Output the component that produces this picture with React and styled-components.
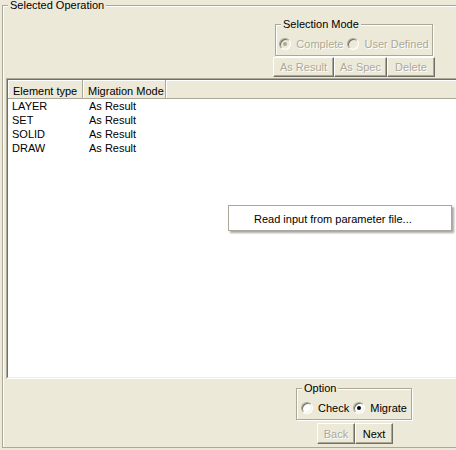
import styled, { createGlobalStyle } from "styled-components";

const GlobalStyle = createGlobalStyle`
  html, body {
    margin: 0;
    padding: 0;
    background: #ece9d8;
    overflow: hidden;
  }
  body {
    font-family: "Liberation Sans", Arial, sans-serif;
    font-size: 11px;
    color: #000;
  }
`;

const Frame = styled.div`
  box-sizing: border-box;
  margin: 5px 0 0 2px;
  width: 470px;
  height: 443px;
  border: 1px solid #aca899;
  box-shadow: inset 1px 1px 0 #fff, 1px 1px 0 #fff;
  display: flex;
  flex-direction: column;
`;

const Caption = styled.div`
  align-self: flex-start;
  margin: -7px 0 0 5px;
  padding: 0 2px;
  height: 13px;
  line-height: 13px;
  background: #ece9d8;
  white-space: nowrap;
`;

const Bar = styled.div`
  display: grid;
  grid-template-columns: 1fr 1fr;
  margin-top: ${(p) => p.$top}px;
  padding-bottom: ${(p) => p.$bottom || 0}px;
`;

const ControlColumn = styled.div`
  grid-column: 2;
  display: flex;
  flex-direction: column;
  align-items: center;
`;

const Group = styled.div`
  box-sizing: border-box;
  width: ${(p) => p.$width}px;
  height: 32px;
  border: 1px solid #aca899;
  box-shadow: inset 1px 1px 0 #fff, 1px 1px 0 #fff;
  display: flex;
  flex-direction: column;
`;

const RadioRow = styled.div`
  margin-top: 6px;
  height: 14px;
  display: flex;
  align-items: center;
  justify-content: center;
`;

const RadioOption = styled.label`
  display: flex;
  align-items: center;
  gap: 5px;
  line-height: 14px;
  white-space: nowrap;
  color: ${(p) => (p.$disabled ? "#aca899" : "#000")};
  text-shadow: ${(p) => (p.$disabled ? "1px 1px 0 #fff" : "none")};
  & + & {
    margin-left: 4px;
  }
`;

const RadioMark = styled.span`
  box-sizing: border-box;
  width: 12px;
  height: 12px;
  flex: none;
  border-radius: 50%;
  border: 1px solid;
  border-color: #aca899 #fff #fff #aca899;
  box-shadow: inset 1px 1px 0 #716f64, inset -1px -1px 0 #f1efe2;
  background: ${(p) => (p.$disabled ? "#ece9d8" : "#fff")};
  display: flex;
  align-items: center;
  justify-content: center;
  &::after {
    content: "";
    width: 4px;
    height: 4px;
    border-radius: 50%;
    background: ${(p) => (p.$disabled ? "#aca899" : "#000")};
    visibility: ${(p) => (p.$checked ? "visible" : "hidden")};
  }
`;

const ButtonRow = styled.div`
  display: flex;
  margin-top: ${(p) => p.$top}px;
  padding-left: ${(p) => p.$shift || 0}px;
`;

const Button = styled.button`
  box-sizing: border-box;
  width: ${(p) => p.$w}px;
  height: ${(p) => p.$h}px;
  margin: 0;
  padding: 0;
  font: inherit;
  line-height: 14px;
  background: #ece9d8;
  border: 1px solid;
  border-color: #fff #716f64 #716f64 #fff;
  box-shadow: inset -1px -1px 0 #aca899;
  color: ${(p) => (p.disabled ? "#aca899" : "#000")};
  text-shadow: ${(p) => (p.disabled ? "1px 1px 0 #fff" : "none")};
`;

const ScrollPane = styled.div`
  flex: 1;
  margin: 1px 0 0 3px;
  border: 1px solid;
  border-color: #aca899 #fff #fff #aca899;
  display: flex;
  min-height: 0;
`;

const Viewport = styled.div`
  flex: 1;
  border: 1px solid;
  border-color: #716f64 #f1efe2 #f1efe2 #716f64;
  background: #fff;
  display: flex;
  flex-direction: column;
`;

const TableRow = styled.div`
  display: grid;
  grid-template-columns: 75px 83px 1fr;
`;

const HeaderCell = styled.div`
  box-sizing: border-box;
  height: 19px;
  padding: 4px 0 0 5px;
  line-height: 14px;
  background: #ece9d8;
  border-right: 1px solid #aca899;
  border-bottom: 1px solid #aca899;
  box-shadow: inset 1px 1px 0 #fff;
  white-space: nowrap;
`;

const Cell = styled.div`
  height: 14px;
  line-height: 14px;
  padding-left: ${(p) => p.$indent}px;
  white-space: nowrap;
`;

const PopupMenu = styled.div`
  position: absolute;
  left: 228px;
  top: 205px;
  box-sizing: border-box;
  width: 224px;
  padding: 3px 0 1px;
  background: #fff;
  border: 1px solid #aca899;
  box-shadow: 2px 2px 2px rgba(0, 0, 0, 0.35);
`;

const MenuItem = styled.div`
  line-height: 20px;
  padding-left: 25px;
  white-space: nowrap;
`;

const rows = [
  { type: "LAYER", mode: "As Result" },
  { type: "SET", mode: "As Result" },
  { type: "SOLID", mode: "As Result" },
  { type: "DRAW", mode: "As Result" },
];

const Radio = ({ label, checked, disabled }) => (
  <RadioOption $disabled={disabled}>
    <RadioMark $checked={checked} $disabled={disabled} />
    {label}
  </RadioOption>
);

export default function App() {
  return (
    <>
      <GlobalStyle />
      <Frame>
        <Caption>Selected Operation</Caption>
        <Bar $top={12}>
          <ControlColumn>
            <Group $width={158}>
              <Caption>Selection Mode</Caption>
              <RadioRow>
                <Radio label="Complete" checked disabled />
                <Radio label="User Defined" disabled />
              </RadioRow>
            </Group>
            <ButtonRow $top={1}>
              <Button $w={61} $h={20} disabled>
                As Result
              </Button>
              <Button $w={53} $h={20} disabled>
                As Spec
              </Button>
              <Button $w={48} $h={20} disabled>
                Delete
              </Button>
            </ButtonRow>
          </ControlColumn>
        </Bar>
        <ScrollPane>
          <Viewport>
            <TableRow>
              <HeaderCell>Element type</HeaderCell>
              <HeaderCell>Migration Mode</HeaderCell>
              <HeaderCell />
            </TableRow>
            {rows.map((r) => (
              <TableRow key={r.type}>
                <Cell $indent={4}>{r.type}</Cell>
                <Cell $indent={6}>{r.mode}</Cell>
                <Cell />
              </TableRow>
            ))}
          </Viewport>
        </ScrollPane>
        <Bar $top={9} $bottom={3}>
          <ControlColumn>
            <Group $width={116}>
              <Caption>Option</Caption>
              <RadioRow>
                <Radio label="Check" />
                <Radio label="Migrate" checked />
              </RadioRow>
            </Group>
            <ButtonRow $top={3} $shift={2}>
              <Button $w={38} $h={21} disabled>
                Back
              </Button>
              <Button $w={38} $h={21}>
                Next
              </Button>
            </ButtonRow>
          </ControlColumn>
        </Bar>
      </Frame>
      <PopupMenu>
        <MenuItem>Read input from parameter file...</MenuItem>
      </PopupMenu>
    </>
  );
}
